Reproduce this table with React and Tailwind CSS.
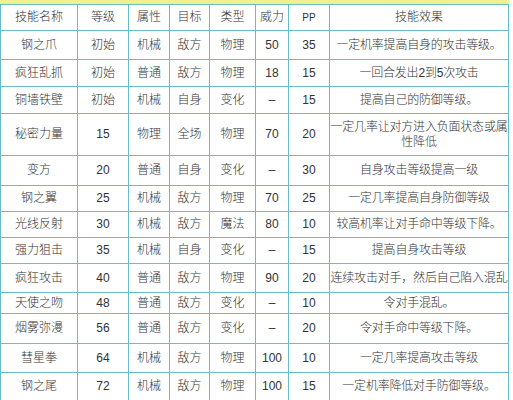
const columns = [
  { label: '技能名称', width: 77 },
  { label: '等级', width: 51 },
  { label: '属性', width: 41 },
  { label: '目标', width: 40 },
  { label: '类型', width: 46 },
  { label: '威力', width: 33 },
  { label: 'PP', width: 41 },
  { label: '技能效果', width: 179 },
];

const skills = [
  { h: 29, name: '钢之爪', level: '初始', attr: '机械', target: '敌方', type: '物理', power: '50', pp: '35', effect: '一定机率提高自身的攻击等级。' },
  { h: 27, name: '疯狂乱抓', level: '初始', attr: '普通', target: '敌方', type: '物理', power: '18', pp: '15', effect: '一回合发出2到5次攻击' },
  { h: 27, name: '铜墙铁壁', level: '初始', attr: '机械', target: '自身', type: '变化', power: '–', pp: '15', effect: '提高自己的防御等级。' },
  { h: 42, name: '秘密力量', level: '15', attr: '物理', target: '全场', type: '物理', power: '70', pp: '20', effect: ['一定几率让对方进入负面状态或属', '性降低'] },
  { h: 30, name: '变方', level: '20', attr: '普通', target: '自身', type: '变化', power: '–', pp: '30', effect: '自身攻击等级提高一级' },
  { h: 26, name: '钢之翼', level: '25', attr: '机械', target: '敌方', type: '物理', power: '70', pp: '25', effect: '一定几率提高自身防御等级' },
  { h: 26, name: '光线反射', level: '30', attr: '机械', target: '敌方', type: '魔法', power: '80', pp: '10', effect: '较高机率让对手命中等级下降。' },
  { h: 26, name: '强力狙击', level: '35', attr: '机械', target: '自身', type: '变化', power: '–', pp: '15', effect: '提高自身攻击等级' },
  { h: 29, name: '疯狂攻击', level: '40', attr: '普通', target: '敌方', type: '物理', power: '90', pp: '20', effect: '连续攻击对手，然后自己陷入混乱' },
  { h: 21, name: '天使之吻', level: '48', attr: '普通', target: '敌方', type: '变化', power: '–', pp: '10', effect: '令对手混乱。' },
  { h: 30, name: '烟雾弥漫', level: '56', attr: '普通', target: '敌方', type: '变化', power: '–', pp: '20', effect: '令对手命中等级下降。' },
  { h: 29, name: '彗星拳', level: '64', attr: '机械', target: '敌方', type: '物理', power: '100', pp: '10', effect: '一定几率提高攻击等级' },
  { h: 28, name: '钢之尾', level: '72', attr: '机械', target: '敌方', type: '物理', power: '100', pp: '15', effect: '一定机率降低对手防御等级。' },
];

const cell = 'border border-[#68bccb] p-0 text-center whitespace-nowrap';

export default function App() {
  return (
    <div
      className="w-[513px] h-[400px] overflow-hidden bg-white text-[12px] leading-[15px] font-light text-[#333]"
      style={{ fontFamily: '"Liberation Sans", "Noto Sans CJK SC", sans-serif' }}
    >
      {/* yellow strip above the table */}
      <div className="w-[509px] h-[4px] bg-[#eef28c]" />
      <table className="table-fixed border-collapse w-[509px]">
        <colgroup>
          {columns.map((c) => (
            <col key={c.label} style={{ width: c.width }} />
          ))}
        </colgroup>
        <thead>
          <tr className="h-[26px]">
            {columns.map((c) => (
              <th key={c.label} className={`${cell} font-light ${c.label === 'PP' ? 'text-[10px]' : ''}`}>
                {c.label}
              </th>
            ))}
          </tr>
        </thead>
        <tbody>
          {skills.map((s) => (
            <tr key={s.name} style={{ height: s.h }}>
              <td className={cell}>{s.name}</td>
              <td className={cell}>{s.level}</td>
              <td className={cell}>{s.attr}</td>
              <td className={cell}>{s.target}</td>
              <td className={cell}>{s.type}</td>
              <td className={cell}>{s.power}</td>
              <td className={cell}>{s.pp}</td>
              <td className={`${cell} tracking-[-0.2px]`}>
                {Array.isArray(s.effect) ? (
                  <>
                    {s.effect[0]}
                    <br />
                    {s.effect[1]}
                  </>
                ) : (
                  s.effect
                )}
              </td>
            </tr>
          ))}
        </tbody>
      </table>
    </div>
  );
}
